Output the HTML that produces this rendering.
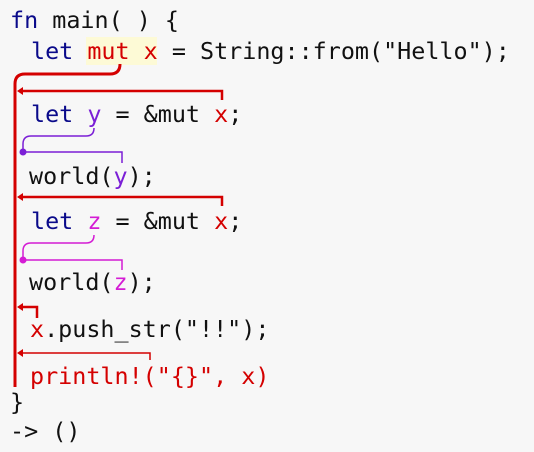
<!DOCTYPE html>
<html><head><meta charset="utf-8"><style>
html,body{margin:0;padding:0;background:#f7f7f7;width:534px;height:452px;overflow:hidden}
svg{display:block}
text{font-family:"DejaVu Sans Mono","Liberation Mono",monospace;font-size:23.4px;fill:#111}
.k{fill:#0a0a8a}.r{fill:#d40000}.p{fill:#7b1fd6}.m{fill:#d41cd4}
</style></head><body>
<svg width="534" height="452" viewBox="0 0 534 452">
<rect x="86" y="37" width="71" height="28" fill="#fdfad6"/>
<text x="10" y="28"><tspan class="k">fn</tspan> main( ) {</text>
<text x="31" y="59" xml:space="preserve"><tspan class="k">let</tspan> <tspan class="r">mut x</tspan> = String::from("Hello");</text>
<text x="31" y="122" xml:space="preserve"><tspan class="k">let</tspan> <tspan class="p">y</tspan> = &amp;mut <tspan class="r">x</tspan>;</text>
<text x="29" y="184" xml:space="preserve">world(<tspan class="p">y</tspan>);</text>
<text x="31" y="229" xml:space="preserve"><tspan class="k">let</tspan> <tspan class="m">z</tspan> = &amp;mut <tspan class="r">x</tspan>;</text>
<text x="29" y="290" xml:space="preserve">world(<tspan class="m">z</tspan>);</text>
<text x="30" y="337" xml:space="preserve"><tspan class="r">x</tspan>.push_str("!!");</text>
<text x="30" y="384" xml:space="preserve" class="r">println!("{}", x)</text>
<text x="10" y="410">}</text>
<text x="10" y="439">-&gt; ()</text>
<g fill="none" stroke="#d40000">
<path d="M120 64 Q120 74 110 74 L25 74 Q15 74 15 84 L15 387" stroke-width="3"/>
<path d="M20 91 L222 91 L222 100" stroke-width="2.5"/>
<path d="M20 197 L222 197 L222 206" stroke-width="2.5"/>
<path d="M20 307 L37 307 L37 318" stroke-width="2.5"/>
<path d="M20 353 L150 353 L150 360" stroke-width="1.5"/>
</g>
<g fill="#d40000">
<path d="M17 91 L23 87 L23 95Z"/><path d="M17 197 L23 193 L23 201Z"/>
<path d="M17 307 L23 303 L23 311Z"/><path d="M17 353 L23 349 L23 357Z"/>
</g>
<g fill="none" stroke="#7b1fd6" stroke-width="1.5">
<path d="M94 128 Q94 136 86 136 L31 136 Q23 136 23 144 L23 152 L122 152 L122 163"/>
</g>
<circle cx="23" cy="152" r="3.5" fill="#7b1fd6"/>
<g fill="none" stroke="#d41cd4" stroke-width="1.5">
<path d="M94 235 Q94 243 86 243 L31 243 Q23 243 23 251 L23 260 L122 260 L122 270"/>
</g>
<circle cx="23" cy="260" r="3.5" fill="#d41cd4"/>
</svg>
</body></html>
